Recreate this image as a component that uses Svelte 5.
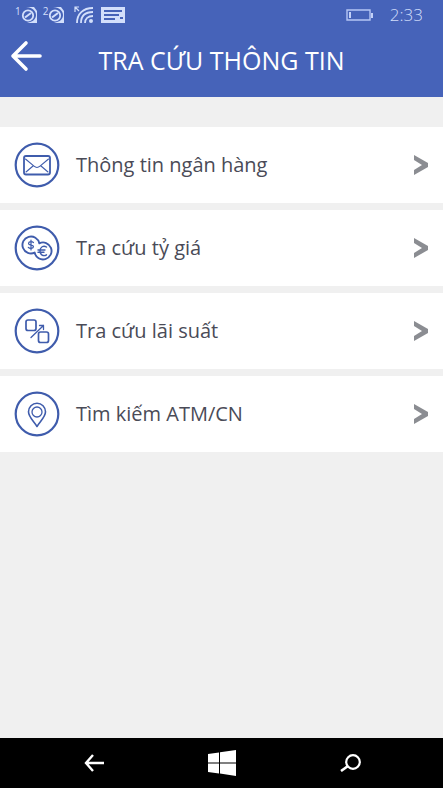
<script lang="ts">
  const items = [
    { label: 'Thông tin ngân hàng', icon: 'mail' },
    { label: 'Tra cứu tỷ giá', icon: 'coins' },
    { label: 'Tra cứu lãi suất', icon: 'rate' },
    { label: 'Tìm kiếm ATM/CN', icon: 'pin' }
  ];
</script>

<div class="screen">
  <header>
    <div class="status">
      <div class="signals">
        {#each ['1', '2'] as sim}
          <span class="sim">
            <span class="sim-no">{sim}</span>
            <svg width="17" height="18" viewBox="0 0 17 18" aria-hidden="true">
              <path d="M5 1h8l3 4v12H6l3-1c4-1 6-4 6-7 0-4-4-8-10-8z" fill="#d3dffb" />
              <circle cx="7" cy="9.5" r="5.2" fill="none" stroke="#d3dffb" stroke-width="1.8" />
              <path d="M4 11.500l6-4.500" stroke="#d3dffb" stroke-width="2" />
            </svg>
          </span>
        {/each}
        <svg class="wifi" width="20" height="18" viewBox="0 0 20 18" aria-hidden="true">
          <g fill="none" stroke="#d3dffb" stroke-width="1.8">
            <path d="M3 17C3 8 9 2 19 2M7 17C7 10 11 6 19 6M11 17c0-4 3-7 8-7" />
            <path d="M1 6V1h4M1 1l4 4" stroke-width="1.2" />
          </g>
          <circle cx="17" cy="15" r="2" fill="#d3dffb" />
        </svg>
        <svg width="24" height="16" viewBox="0 0 24 16" aria-hidden="true">
          <path d="M0 0h24v16H0z" fill="#d3dffb" />
          <path d="M3 4h18M3 8h15M3 12h11M19 11h3" stroke="#4763b8" stroke-width="1.8" />
        </svg>
      </div>
      <div class="right">
        <svg width="28" height="12" viewBox="0 0 28 12" aria-hidden="true">
          <path d="M1 1h23v10H1z" fill="none" stroke="#b5c6f5" stroke-width="1.4" />
          <path d="M3 3h2v6H3zM25 4h2v5h-2z" fill="#c3d1f7" />
        </svg>
        <time>2:33</time>
      </div>
    </div>
    <div class="titlebar">
      <button class="back" aria-label="Quay lại">
        <svg width="32" height="32" viewBox="0 0 32 32" aria-hidden="true">
          <path d="M16 3L3 16l13 13M3 16h27" fill="none" stroke="#fff" stroke-width="3.6" stroke-linecap="round" stroke-linejoin="round" />
        </svg>
      </button>
      <h1>TRA CỨU THÔNG TIN</h1>
    </div>
  </header>

  <main>
    <ul>
      {#each items as item}
        <li>
          <a href="#{item.icon}">
            <svg class="icon" width="46" height="46" viewBox="0 0 46 46" aria-hidden="true">
              <circle cx="23" cy="23" r="21.3" stroke-width="2.2" />
              {#if item.icon === 'mail'}
                <rect x="10" y="14" width="26" height="18.5" rx="2" stroke-width="1.8" />
                <path d="M11.500 17l8.500 7.200c2 1.700 4 1.700 6 0L34.500 17M12 30l7-6M34 30l-7-6" stroke-width="1.1" />
              {:else if item.icon === 'coins'}
                <path d="M25.300 18.300A8.500 8.500 0 1 0 20.700 27.600A8.500 8.500 0 1 0 25.300 18.300z" stroke-width="1.9" />
                <path d="M19.500 17.600c-1-1.500-5-1.500-5 .8s5 1 5 3.200-4 2.200-5.200.7M17 15v10" stroke-width="1.2" />
                <path d="M32.500 22c-3-2-6.500 0-6.500 3.900s3.500 5.900 6.500 3.900M24 25h7M24 27.200h6" stroke-width="1.4" />
              {:else if item.icon === 'rate'}
                <rect x="12" y="12" width="10" height="10.5" rx="2" stroke-width="1.7" />
                <rect x="24.5" y="24" width="10" height="10.5" rx="2" stroke-width="1.7" />
                <path d="M17 29.500L29.500 17.500M25.500 17.500h4v4" stroke-width="1.3" />
              {:else}
                <path d="M23 35.500C20 30.500 14.500 26 14.500 20.800a8.500 8.500 0 0 1 17 0C31.500 26 26 30.500 23 35.500z" stroke-width="1.6" />
                <circle cx="23" cy="21" r="5" stroke-width="1.3" />
              {/if}
            </svg>
            <span class="label">{item.label}</span>
            <svg width="14" height="20" viewBox="0 0 14 20" aria-hidden="true">
              <path d="M0 0l14 8v4L0 20v-5l8-5-8-5z" fill="#8b8d92" />
            </svg>
          </a>
        </li>
      {/each}
    </ul>
  </main>

  <nav>
    <button aria-label="Back">
      <svg width="20" height="18" viewBox="0 0 20 18" aria-hidden="true">
        <path d="M9 1L2 9l7 8M2 9h18" fill="none" stroke="#fff" stroke-width="2.4" />
      </svg>
    </button>
    <button aria-label="Start">
      <svg width="28" height="26" viewBox="0 0 28 26" aria-hidden="true">
        <path d="M0 4l11-1.600V12.400H0zM12 2.300L28 0v12.400H12zM0 13.400h11v10L0 22zM12 13.400h16V26l-16-2.400z" fill="#fff" />
      </svg>
    </button>
    <button aria-label="Search">
      <svg width="22" height="18" viewBox="0 0 22 18" aria-hidden="true">
        <circle cx="14" cy="8" r="6.8" fill="none" stroke="#fff" stroke-width="2.2" />
        <path d="M9 12l-7 5" stroke="#fff" stroke-width="2.6" />
      </svg>
    </button>
  </nav>
</div>

<style>
  :global(body) { margin: 0; background: #f0f0f0; }
  .screen { min-height: 100vh; display: flex; flex-direction: column; background: #f0f0f0; font-family: "Open Sans", "Noto Sans", sans-serif; }
  svg { display: block; flex: none; }
  button { border: 0; padding: 0; background: none; cursor: pointer; }

  header { height: 97px; box-sizing: border-box; background: #4663b9; color: #fff; }
  .status { display: flex; justify-content: space-between; align-items: center; height: 30px; padding: 0 20px 0 15px; }
  .signals { display: flex; align-items: center; gap: 5px; }
  .sim { display: flex; align-items: center; }
  .sim-no { align-self: flex-start; font-size: 10px; line-height: 10px; color: #d3dffb; }
  .wifi { margin: 0 2px 0 4px; }
  .right { display: flex; align-items: center; gap: 16px; }
  time { font-size: 17px; line-height: 20px; font-weight: 300; color: #d3dffb; }
  .titlebar { display: grid; grid-template-columns: 32px 1fr 32px; align-items: center; padding: 0 10px; }
  .back { height: 52px; display: flex; align-items: center; }
  h1 { margin: 8px 0 0; text-align: center; font-size: 25px; line-height: 44px; font-weight: 400; white-space: nowrap; }

  main { flex: 1; padding-top: 30px; }
  ul { list-style: none; margin: 0; padding: 0; display: grid; gap: 7px; }
  li { background: #fff; }
  a { display: flex; align-items: center; height: 76px; padding: 0 15px 0 14px; color: #4a4b57; text-decoration: none; }
  .icon { fill: none; stroke: #3f5cac; stroke-linecap: round; stroke-linejoin: round; }
  .label { flex: 1; margin-left: 16px; font-size: 20px; line-height: 28px; }

  nav { display: grid; grid-template-columns: repeat(3, 128px); justify-content: center; height: 50px; background: #000; }
  nav button { display: flex; align-items: center; justify-content: center; }
</style>
